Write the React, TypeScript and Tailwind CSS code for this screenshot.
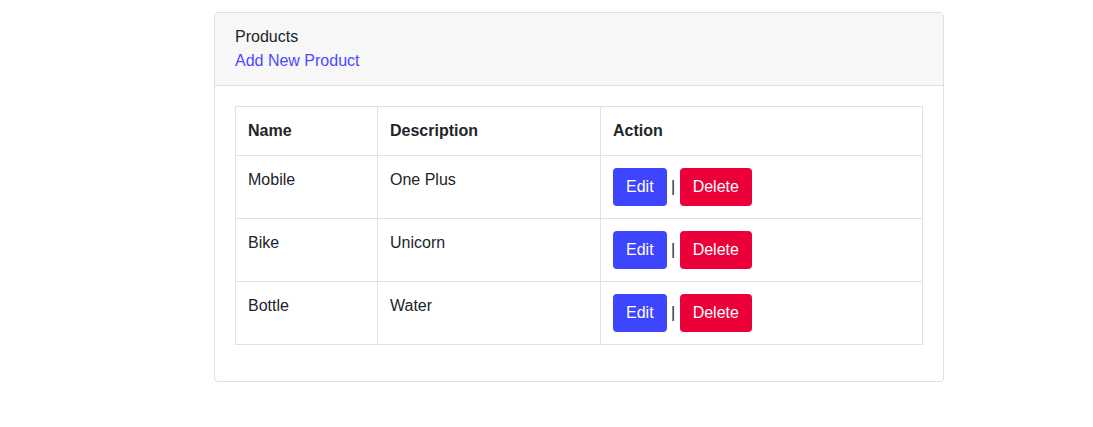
import React from 'react';

interface Product {
  name: string;
  description: string;
}

const products: Product[] = [
  { name: 'Mobile', description: 'One Plus' },
  { name: 'Bike', description: 'Unicorn' },
  { name: 'Bottle', description: 'Water' },
];

const App: React.FC = () => {
  return (
    <div className="min-h-[427px] bg-white pt-3 text-base leading-6 text-[#212529] font-['Liberation_Sans',Arial,sans-serif]">
      <div className="ml-[214px] w-[730px] rounded border border-[#dfdfdf]">
        <div className="border-b border-[#dfdfdf] bg-[#f7f7f7] px-5 py-3">
          <div>Products</div>
          <a href="#" className="text-[#4a4aff]">Add New Product</a>
        </div>
        <div className="p-5">
          <table className="mb-4 w-full border-collapse border border-[#dee2e6]">
            <thead>
              <tr>
                <th className="w-[142px] border border-[#dee2e6] p-3 text-left font-bold">Name</th>
                <th className="w-[223px] border border-[#dee2e6] p-3 text-left font-bold">Description</th>
                <th className="border border-[#dee2e6] p-3 text-left font-bold">Action</th>
              </tr>
            </thead>
            <tbody>
              {products.map((p) => (
                <tr key={p.name}>
                  <td className="border border-[#dee2e6] p-3 align-top">{p.name}</td>
                  <td className="border border-[#dee2e6] p-3 align-top">{p.description}</td>
                  <td className="border border-[#dee2e6] p-3 align-top">
                    <button className="inline-block h-[38px] rounded border border-transparent bg-[#3d45ff] px-3 text-white">Edit</button>
                    {' | '}
                    <button className="inline-block h-[38px] rounded border border-transparent bg-[#ec0039] px-3 text-white">Delete</button>
                  </td>
                </tr>
              ))}
            </tbody>
          </table>
        </div>
      </div>
    </div>
  );
};

export default App;
